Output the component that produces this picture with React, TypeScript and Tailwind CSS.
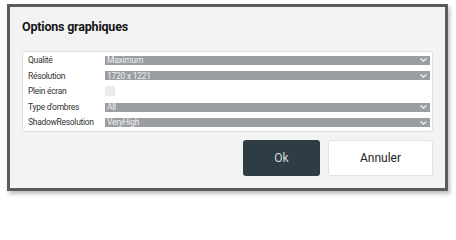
import React from 'react';

const rows: { label: string; value?: string }[] = [
  { label: 'Qualité', value: 'Maximum' },
  { label: 'Résolution', value: '1720 x 1221' },
  { label: 'Plein écran' },
  { label: "Type d'ombres", value: 'All' },
  { label: 'ShadowResolution', value: 'VeryHigh' },
];

const Chevron: React.FC = () => (
  <svg width="7" height="4" viewBox="0 0 7 4" className="mr-[3px] shrink-0">
    <path d="M0.6 0.6 L3.5 3.2 L6.4 0.6" fill="none" stroke="#f2f2f2" strokeWidth="1.3" />
  </svg>
);

const SelectBar: React.FC<{ value: string }> = ({ value }) => (
  <div className="flex-1 h-[9px] bg-[#9a9ea2] flex items-center justify-between pl-[2px] overflow-visible">
    <span className="text-[8.5px] leading-none text-[#eef0f1] tracking-[-0.25px]">{value}</span>
    <Chevron />
  </div>
);

export default function App() {
  return (
    <div className="w-[456px] h-[202px] bg-white pt-[4px] pl-[7px] font-['Roboto',sans-serif]">
      <div className="w-[441px] h-[187px] border-[3px] border-[#5a5d5a] bg-[#f3f3f3] shadow-[2px_3px_4px_rgba(0,0,0,0.25)] flex flex-col px-[12px]">
        <h1 className="mt-[12px] text-[12.5px] leading-[15px] font-bold text-[#151515] tracking-[-0.2px]">Options graphiques</h1>
        <div className="mt-[17px] bg-white border border-[#dedede] rounded-[3px] pl-[5px] pr-[2px] py-[0.5px]">
          {rows.map(r => (
            <div key={r.label} className="h-[15.6px] flex items-center">
              <span className="w-[77px] shrink-0 text-[8.5px] text-[#333] tracking-[-0.3px]">{r.label}</span>
              {r.value ? (
                <SelectBar value={r.value} />
              ) : (
                <div className="w-[10px] h-[10px] bg-[#e8ecee]" />
              )}
            </div>
          ))}
        </div>
        <div className="mt-[8px] flex justify-end gap-[8px]">
          <button className="w-[77px] h-[36px] rounded-[3px] bg-[#2e3c45] text-[#d3d8db] text-[12px]">Ok</button>
          <button className="w-[105px] h-[36px] rounded-[3px] bg-white border border-[#e2e2e2] text-[#222] text-[12px]">Annuler</button>
        </div>
      </div>
    </div>
  );
}
